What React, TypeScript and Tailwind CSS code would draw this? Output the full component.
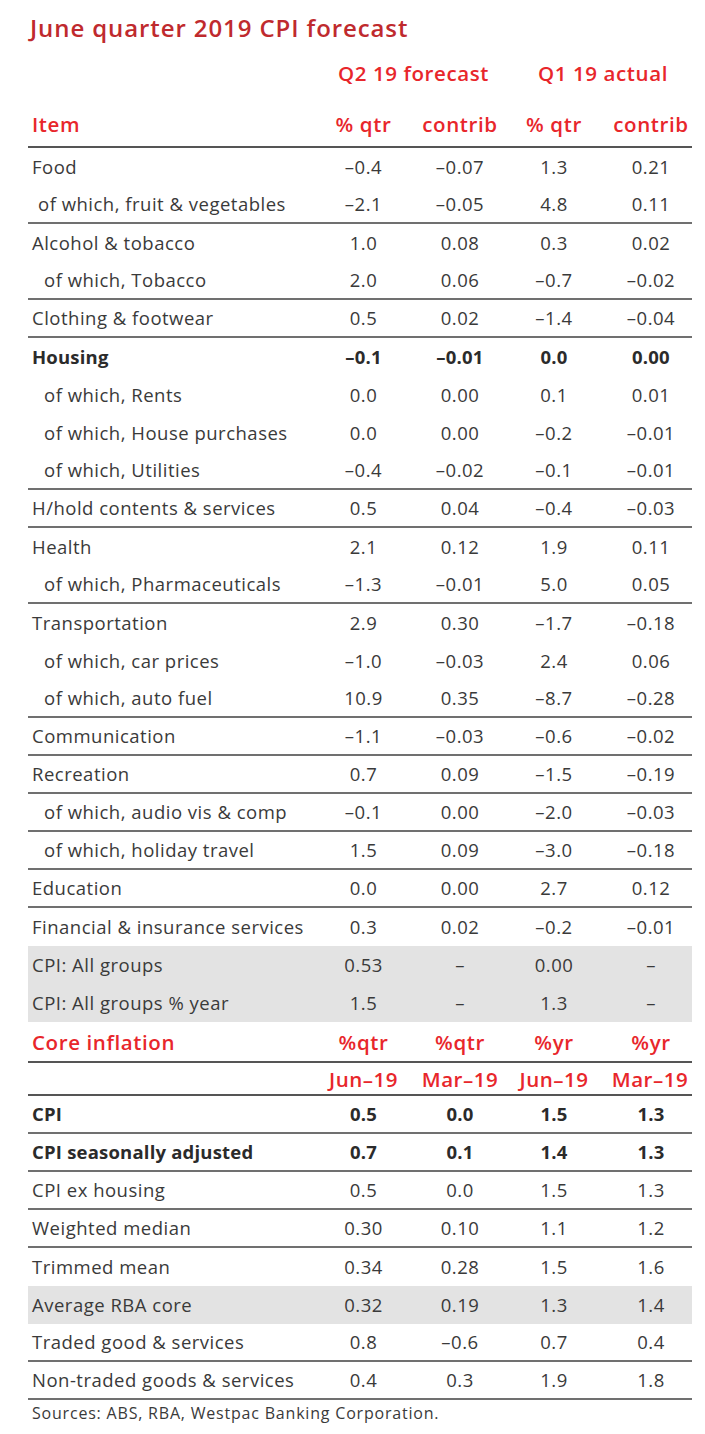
import React from "react";

type Row = {
  label: string;
  v: [string, string, string, string];
  indent?: "sm" | "lg";
  bold?: boolean;
  line?: boolean;
  shade?: boolean;
};

const cpiRows: Row[] = [
  { label: "Food", v: ["–0.4", "–0.07", "1.3", "0.21"] },
  { label: "of which, fruit & vegetables", v: ["–2.1", "–0.05", "4.8", "0.11"], indent: "sm", line: true },
  { label: "Alcohol & tobacco", v: ["1.0", "0.08", "0.3", "0.02"] },
  { label: "of which, Tobacco", v: ["2.0", "0.06", "–0.7", "–0.02"], indent: "lg", line: true },
  { label: "Clothing & footwear", v: ["0.5", "0.02", "–1.4", "–0.04"], line: true },
  { label: "Housing", v: ["–0.1", "–0.01", "0.0", "0.00"], bold: true },
  { label: "of which, Rents", v: ["0.0", "0.00", "0.1", "0.01"], indent: "lg" },
  { label: "of which, House purchases", v: ["0.0", "0.00", "–0.2", "–0.01"], indent: "lg" },
  { label: "of which, Utilities", v: ["–0.4", "–0.02", "–0.1", "–0.01"], indent: "lg", line: true },
  { label: "H/hold contents & services", v: ["0.5", "0.04", "–0.4", "–0.03"], line: true },
  { label: "Health", v: ["2.1", "0.12", "1.9", "0.11"] },
  { label: "of which, Pharmaceuticals", v: ["–1.3", "–0.01", "5.0", "0.05"], indent: "lg", line: true },
  { label: "Transportation", v: ["2.9", "0.30", "–1.7", "–0.18"] },
  { label: "of which, car prices", v: ["–1.0", "–0.03", "2.4", "0.06"], indent: "lg" },
  { label: "of which, auto fuel", v: ["10.9", "0.35", "–8.7", "–0.28"], indent: "lg", line: true },
  { label: "Communication", v: ["–1.1", "–0.03", "–0.6", "–0.02"], line: true },
  { label: "Recreation", v: ["0.7", "0.09", "–1.5", "–0.19"], line: true },
  { label: "of which, audio vis & comp", v: ["–0.1", "0.00", "–2.0", "–0.03"], indent: "lg", line: true },
  { label: "of which, holiday travel", v: ["1.5", "0.09", "–3.0", "–0.18"], indent: "lg", line: true },
  { label: "Education", v: ["0.0", "0.00", "2.7", "0.12"], line: true },
  { label: "Financial & insurance services", v: ["0.3", "0.02", "–0.2", "–0.01"] },
  { label: "CPI: All groups", v: ["0.53", "–", "0.00", "–"], shade: true },
  { label: "CPI: All groups % year", v: ["1.5", "–", "1.3", "–"], shade: true },
];

const coreRows: Row[] = [
  { label: "CPI", v: ["0.5", "0.0", "1.5", "1.3"], bold: true, line: true },
  { label: "CPI seasonally adjusted", v: ["0.7", "0.1", "1.4", "1.3"], bold: true, line: true },
  { label: "CPI ex housing", v: ["0.5", "0.0", "1.5", "1.3"], line: true },
  { label: "Weighted median", v: ["0.30", "0.10", "1.1", "1.2"], line: true },
  { label: "Trimmed mean", v: ["0.34", "0.28", "1.5", "1.6"] },
  { label: "Average RBA core", v: ["0.32", "0.19", "1.3", "1.4"], shade: true },
  { label: "Traded good & services", v: ["0.8", "–0.6", "0.7", "0.4"], line: true },
  { label: "Non-traded goods & services", v: ["0.4", "0.3", "1.9", "1.8"], line: true },
];

const grid = "grid grid-cols-[289px_93px_100px_88px_94px] items-center";

function DataRow({ row }: { row: Row }) {
  const pad = row.indent === "lg" ? "pl-[16px]" : row.indent === "sm" ? "pl-[10px]" : "pl-[4px]";
  return (
    <div
      className={`${grid} h-[38px] ${row.line ? "border-b-2 border-[#707070]" : ""} ${
        row.shade ? "bg-[#e3e3e3]" : ""
      } ${row.bold ? "font-bold text-[#2b2b2b] tracking-[0.2px]" : ""}`}
    >
      <div className={`${pad} whitespace-nowrap`}>{row.label}</div>
      <div className="text-center">{row.v[0]}</div>
      <div className="text-center">{row.v[1]}</div>
      <div className="text-center">{row.v[2]}</div>
      <div className="text-center pl-[12px]">{row.v[3]}</div>
    </div>
  );
}

export default function App() {
  return (
    <div
      className="w-[705px] h-[1434px] bg-white text-[#3a3a3a] text-[18.5px] leading-[26px] tracking-[0.5px]"
      style={{ fontFamily: '"Open Sans", "Liberation Sans", sans-serif' }}
    >
      <div className="ml-[28px] w-[664px]">
        <div className="h-[56px] flex items-center pl-[2px]">
          <h1 className="text-[24px] font-semibold tracking-[0.9px] text-[#bf2a2e]">June quarter 2019 CPI forecast</h1>
        </div>

        <div className={`${grid} h-[34px] text-[20.5px] font-semibold tracking-[0.6px] text-[#e8262b]`}>
          <div />
          <div className="col-span-2 text-center">Q2 19 forecast</div>
          <div className="col-span-2 text-center pl-[4px]">Q1 19 actual</div>
        </div>

        <div
          className={`${grid} h-[58px] items-end pb-[9px] border-b-2 border-[#555] text-[20.5px] font-semibold tracking-[0.6px] text-[#e8262b]`}
        >
          <div className="pl-[4px]">Item</div>
          <div className="text-center">% qtr</div>
          <div className="text-center">contrib</div>
          <div className="text-center">% qtr</div>
          <div className="text-center pl-[12px]">contrib</div>
        </div>

        {cpiRows.map((r) => (
          <DataRow key={r.label} row={r} />
        ))}

        <div
          className={`${grid} h-[41px] border-b-2 border-[#555] text-[20.5px] font-semibold tracking-[0.6px] text-[#e8262b]`}
        >
          <div className="pl-[4px]">Core inflation</div>
          <div className="text-center">%qtr</div>
          <div className="text-center">%qtr</div>
          <div className="text-center">%yr</div>
          <div className="text-center pl-[12px]">%yr</div>
        </div>
        <div
          className={`${grid} h-[33px] border-b-2 border-[#555] text-[20.5px] font-semibold tracking-[0.5px] text-[#e8262b]`}
        >
          <div />
          <div className="text-center">Jun–19</div>
          <div className="text-center">Mar–19</div>
          <div className="text-center">Jun–19</div>
          <div className="text-center pl-[10px]">Mar–19</div>
        </div>

        {coreRows.map((r) => (
          <DataRow key={r.label} row={r} />
        ))}

        <p className="pl-[4px] text-[16px] tracking-[0.8px] text-[#3a3a3a]">Sources: ABS, RBA, Westpac Banking Corporation.</p>
      </div>
    </div>
  );
}
